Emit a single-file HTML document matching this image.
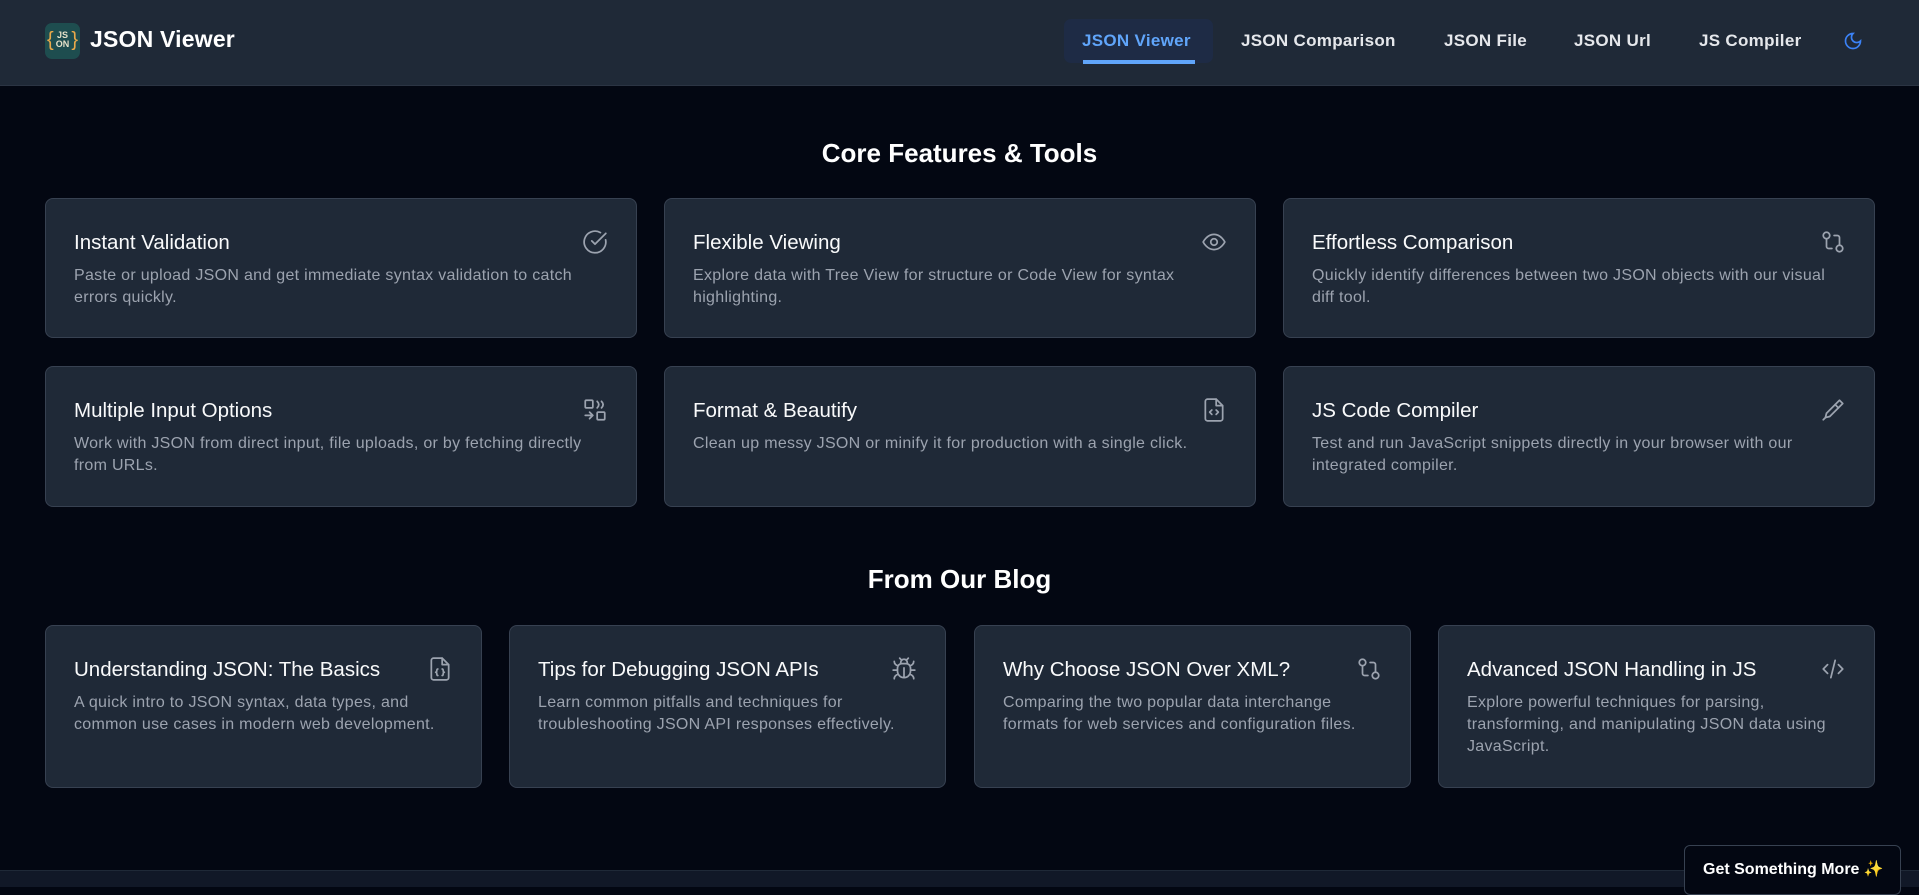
<!DOCTYPE html>
<html><head><meta charset="utf-8"><style>
*{box-sizing:border-box;margin:0;padding:0}
body{width:1919px;height:887px;overflow:hidden;background:#030712;font-family:"Liberation Sans",sans-serif;color:#f3f4f6;position:relative}
.hdr{position:absolute;left:0;top:0;width:1919px;height:86px;background:#1f2937;border-bottom:1px solid #2b3443}
.logo{position:absolute;left:45px;top:23px;width:35px;height:36px;border-radius:7px;background:#1e4d4f;color:#e5e0c8;font-size:9px;font-weight:bold;line-height:9px;text-align:center}
.brand{position:absolute;left:90px;top:26px;font-size:23px;font-weight:bold;color:#fff;letter-spacing:0.2px}
.nav a{position:absolute;top:31px;font-size:17px;font-weight:bold;color:#e5e7eb;text-decoration:none;white-space:nowrap;letter-spacing:0.3px}
.act{position:absolute;left:1064px;top:19px;width:149px;height:44px;border-radius:7px;background:#1e2b45}
.ul{position:absolute;left:1083px;top:60px;width:112px;height:4px;background:#60a5fa}
h2{position:absolute;left:0;width:1919px;text-align:center;font-size:26px;font-weight:bold;color:#fff}
.card{position:absolute;background:#1f2937;border:1px solid #374151;border-radius:8px}
.card .t{position:absolute;left:28px;top:32px;font-size:20.5px;color:#f9fafb}
.card .d{position:absolute;left:28px;top:66px;width:520px;font-size:16px;letter-spacing:0.3px;line-height:22px;color:#9ca3af}
.blog .d{width:385px}
.card svg{position:absolute;right:28px;top:30px;width:26px;height:26px;fill:none;stroke:#9ca3af;stroke-width:1.6;stroke-linecap:round;stroke-linejoin:round}
.foot{position:absolute;left:0;top:870px;width:1919px;height:17px;background:#111827;border-top:1px solid #1f2937}
.btn{position:absolute;left:1684px;top:845px;width:217px;height:50px;background:#030712;border:1px solid #374151;border-radius:6px;font-size:16px;font-weight:bold;color:#fff;padding:13px 0 0 18px}
</style></head><body>
<div class="hdr">
<div class="logo"><div style="padding-top:8px">JS<br>ON</div><span style="position:absolute;left:2px;top:7px;font-size:20px;line-height:20px;font-weight:normal;color:#e9a94a">{</span><span style="position:absolute;right:2px;top:7px;font-size:20px;line-height:20px;font-weight:normal;color:#e9a94a">}</span></div>
<div class="brand">JSON Viewer</div>
<div class="act"></div><div class="ul"></div>
<div class="nav">
<a style="left:1082px;color:#60a5fa">JSON Viewer</a>
<a style="left:1241px">JSON Comparison</a>
<a style="left:1444px">JSON File</a>
<a style="left:1574px">JSON Url</a>
<a style="left:1699px">JS Compiler</a>
</div>
<svg style="position:absolute;left:1843px;top:31px" width="20" height="20" viewBox="0 0 24 24" fill="none" stroke="#3b82f6" stroke-width="2" stroke-linecap="round"><path d="M12 3a6 6 0 0 0 9 9 9 9 0 1 1-9-9z"/></svg>
</div>

<h2 style="top:138px">Core Features &amp; Tools</h2>

<div class="card" style="left:45px;top:198px;width:592px;height:140px"><div class="t">Instant Validation</div><div class="d">Paste or upload JSON and get immediate syntax validation to catch errors quickly.</div><svg viewBox="0 0 24 24"><path d="M21.8 10A10 10 0 1 1 17 3.3"/><path d="M9 11l3 3L22 4"/></svg></div>
<div class="card" style="left:664px;top:198px;width:592px;height:140px"><div class="t">Flexible Viewing</div><div class="d">Explore data with Tree View for structure or Code View for syntax highlighting.</div><svg viewBox="0 0 24 24"><path d="M2 12s3.5-7 10-7 10 7 10 7-3.5 7-10 7S2 12 2 12z"/><circle cx="12" cy="12" r="3"/></svg></div>
<div class="card" style="left:1283px;top:198px;width:592px;height:140px"><div class="t">Effortless Comparison</div><div class="d">Quickly identify differences between two JSON objects with our visual diff tool.</div><svg viewBox="0 0 24 24"><circle cx="18" cy="18" r="3"/><circle cx="6" cy="6" r="3"/><path d="M13 6h3a2 2 0 0 1 2 2v7"/><path d="M11 18H8a2 2 0 0 1-2-2V9"/></svg></div>

<div class="card" style="left:45px;top:366px;width:592px;height:141px"><div class="t">Multiple Input Options</div><div class="d">Work with JSON from direct input, file uploads, or by fetching directly from URLs.</div><svg viewBox="0 0 24 24"><rect x="3" y="3" width="7" height="7" rx="1"/><rect x="14" y="14" width="7" height="7" rx="1"/><path d="M14 4c2 2 2 4 0 6M18 4c2 2 2 4 0 6M3 17h7M7 14l3 3-3 3"/></svg></div>
<div class="card" style="left:664px;top:366px;width:592px;height:141px"><div class="t">Format &amp; Beautify</div><div class="d">Clean up messy JSON or minify it for production with a single click.</div><svg viewBox="0 0 24 24"><path d="M14 2H6a2 2 0 0 0-2 2v16a2 2 0 0 0 2 2h12a2 2 0 0 0 2-2V8z"/><path d="M14 2v6h6M10 12l-2 2 2 2M14 12l2 2-2 2"/></svg></div>
<div class="card" style="left:1283px;top:366px;width:592px;height:141px"><div class="t">JS Code Compiler</div><div class="d">Test and run JavaScript snippets directly in your browser with our integrated compiler.</div><svg viewBox="0 0 24 24"><path d="M18 3l3 3L9 18l-4 1 1-4z"/><path d="M5 19l-2 2M14 7l3 3"/></svg></div>

<h2 style="top:564px">From Our Blog</h2>

<div class="card blog" style="left:45px;top:625px;width:437px;height:163px"><div class="t">Understanding JSON: The Basics</div><div class="d">A quick intro to JSON syntax, data types, and common use cases in modern web development.</div><svg viewBox="0 0 24 24"><path d="M14 2H6a2 2 0 0 0-2 2v16a2 2 0 0 0 2 2h12a2 2 0 0 0 2-2V8z"/><path d="M14 2v6h6M10 12c-1 0-1 1-1 2s-1 1-1 1 1 0 1 1 0 2 1 2M14 12c1 0 1 1 1 2s1 1 1 1-1 0-1 1 0 2-1 2"/></svg></div>
<div class="card blog" style="left:509px;top:625px;width:437px;height:163px"><div class="t">Tips for Debugging JSON APIs</div><div class="d">Learn common pitfalls and techniques for troubleshooting JSON API responses effectively.</div><svg viewBox="0 0 24 24"><path d="M8 2l1.9 1.9M16 2l-1.9 1.9M9 7.1V6a3 3 0 0 1 6 0v1.1"/><path d="M12 20c-3.3 0-6-2.7-6-6v-3a4 4 0 0 1 4-4h4a4 4 0 0 1 4 4v3c0 3.3-2.7 6-6 6zM12 20v-9M6.5 9C4.6 8.8 3 7.1 3 5M6 13H2M3 21c0-2.1 1.7-3.9 3.8-4M20.97 5c0 2.1-1.6 3.8-3.5 4M22 13h-4M17.2 17c2.1.1 3.8 1.9 3.8 4"/></svg></div>
<div class="card blog" style="left:974px;top:625px;width:437px;height:163px"><div class="t">Why Choose JSON Over XML?</div><div class="d">Comparing the two popular data interchange formats for web services and configuration files.</div><svg viewBox="0 0 24 24"><circle cx="18" cy="18" r="3"/><circle cx="6" cy="6" r="3"/><path d="M13 6h3a2 2 0 0 1 2 2v7"/><path d="M11 18H8a2 2 0 0 1-2-2V9"/></svg></div>
<div class="card blog" style="left:1438px;top:625px;width:437px;height:163px"><div class="t">Advanced JSON Handling in JS</div><div class="d">Explore powerful techniques for parsing, transforming, and manipulating JSON data using JavaScript.</div><svg viewBox="0 0 24 24"><path d="M7 8l-4 4 4 4M17 8l4 4-4 4M14 4l-4 16"/></svg></div>

<div class="foot"></div>
<div class="btn">Get Something More <span style="color:#facc15">✨</span></div>
</body></html>
